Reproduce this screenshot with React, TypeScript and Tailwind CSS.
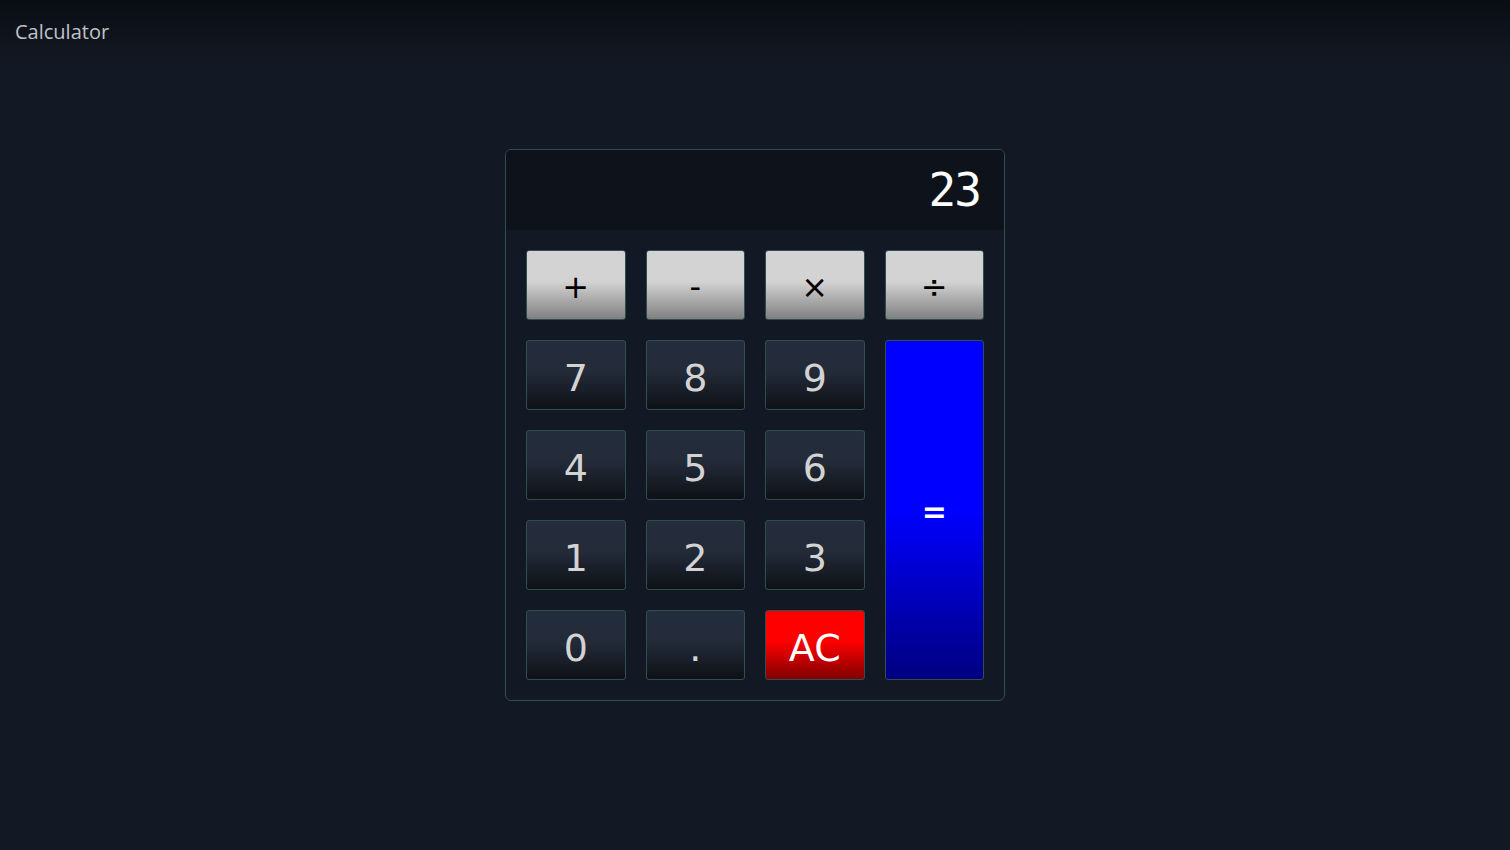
import React from "react";

const opBtn =
  "h-[70px] rounded-[3px] border border-[#2f4f4f] bg-[linear-gradient(to_bottom,#d3d3d3_0%,#d3d3d3_45%,#808080_100%)] text-black text-[32px] leading-none flex items-center justify-center pt-[4px]";
const numBtn =
  "h-[70px] rounded-[3px] border border-[#2f4f4f] bg-[linear-gradient(to_bottom,#242d3c_0%,#232b39_45%,#0e1116_100%)] text-[#d3d3d3] text-[38px] leading-none flex items-center justify-center pt-[6px]";

export default function App() {
  const font = { fontFamily: '"DejaVu Sans", Verdana, sans-serif' };
  return (
    <div
      className="w-full h-[850px] bg-[linear-gradient(to_bottom,#0a0d14_0px,#131924_70px,#131924_100%)] relative flex items-center justify-center"
      style={font}
    >
      <div
        className="absolute left-[15px] top-[18px] text-[20px] leading-[28px] text-[#bfc3c9]"
        style={{ fontFamily: '"Open Sans", "Noto Sans", sans-serif' }}
      >
        Calculator
      </div>
      <div className="w-[500px] h-[552px] rounded-[6px] border border-[#2f4f4f] bg-[#131924] overflow-hidden flex flex-col">
        <div className="h-[80px] bg-[#0e121b] flex items-center justify-end pr-[24px]">
          <span
            className="text-white text-[46px] leading-none tracking-[-2px]"
            style={{ fontFamily: '"DejaVu Sans Mono", monospace', fontWeight: 300 }}
          >
            23
          </span>
        </div>
        <div className="p-[20px] grid grid-cols-4 grid-rows-5 gap-[20px] flex-1">
          <button className={opBtn}>+</button>
          <button className={opBtn}>-</button>
          <button className={opBtn}>×</button>
          <button className={opBtn}>÷</button>
          <button className={numBtn}>7</button>
          <button className={numBtn}>8</button>
          <button className={numBtn}>9</button>
          <button className="row-span-4 rounded-[3px] border border-[#2f4f4f] bg-[linear-gradient(to_bottom,#0000ff_0%,#0000ff_50%,#000080_100%)] text-white text-[30px] font-bold leading-none flex items-center justify-center pt-[4px]">
            =
          </button>
          <button className={numBtn}>4</button>
          <button className={numBtn}>5</button>
          <button className={numBtn}>6</button>
          <button className={numBtn}>1</button>
          <button className={numBtn}>2</button>
          <button className={numBtn}>3</button>
          <button className={numBtn}>0</button>
          <button className={numBtn}>.</button>
          <button className="h-[70px] rounded-[3px] border border-[#2f4f4f] bg-[linear-gradient(to_bottom,#ff0000_0%,#ff0000_45%,#800000_100%)] text-white text-[38px] leading-none flex items-center justify-center pt-[6px]">
            AC
          </button>
        </div>
      </div>
    </div>
  );
}
